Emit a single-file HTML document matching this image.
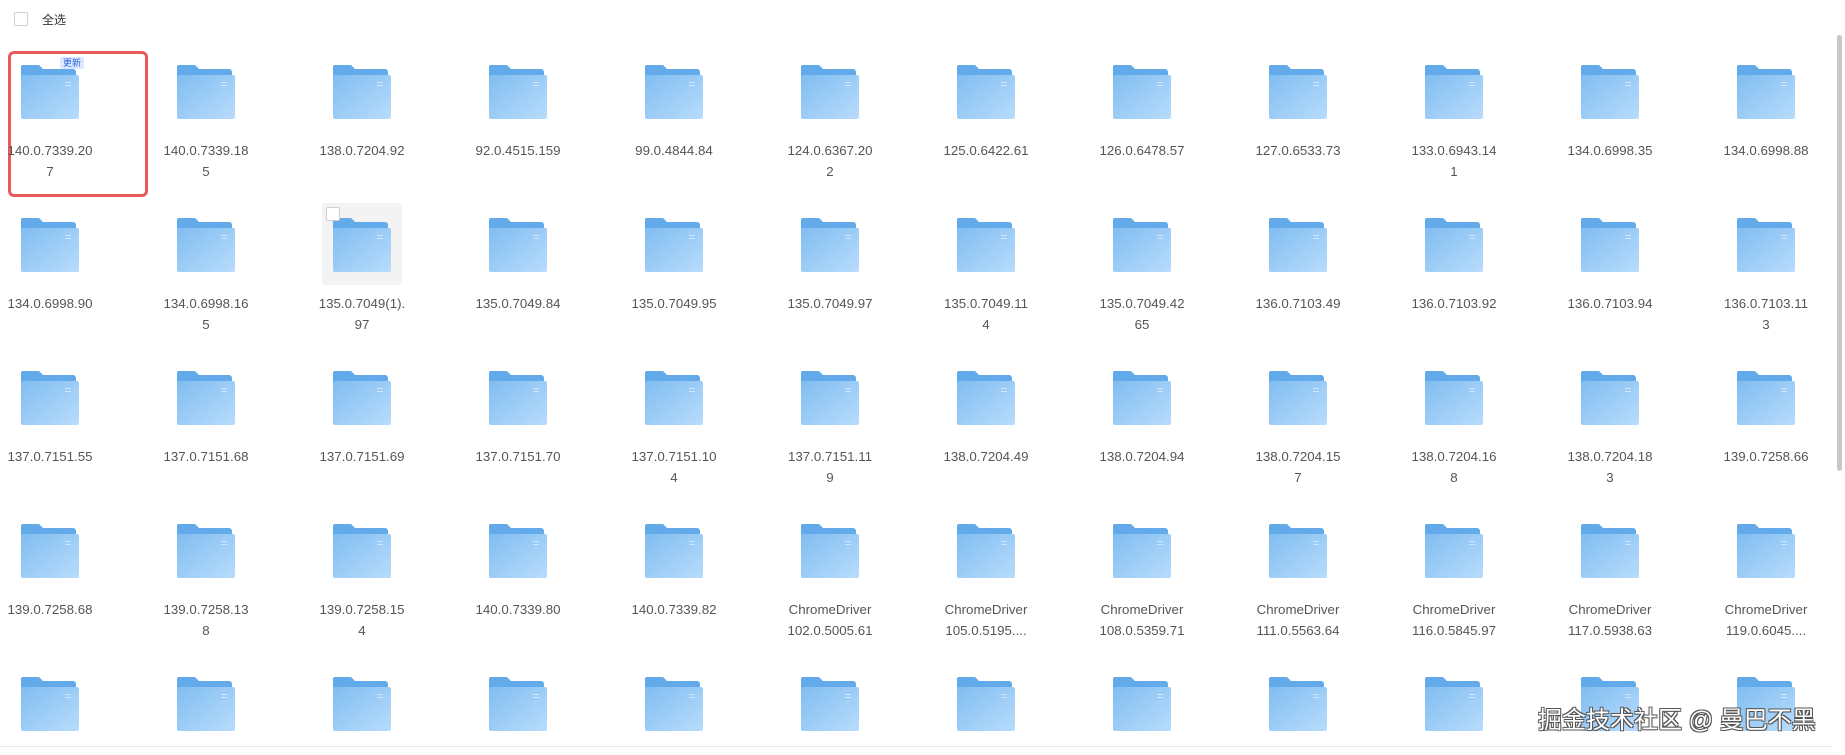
<!DOCTYPE html>
<html><head><meta charset="utf-8"><style>
body{margin:0;width:1845px;height:755px;overflow:hidden;background:#fff;font-family:"Liberation Sans","Noto Sans CJK SC",sans-serif;position:relative}
.cb{position:absolute;width:12px;height:12px;border:1px solid #d0d0d0;border-radius:2px;background:#fff;z-index:2}
.row{position:absolute;left:-28px;display:flex}
.it{width:156px;flex:none;text-align:center}
.it svg{display:block;margin:0 auto}
.t{width:89px;margin:20px auto 0;font-size:13.3px;line-height:21px;color:#555;overflow-wrap:anywhere}
</style></head><body>
<svg width="0" height="0" style="position:absolute"><defs>
<linearGradient id="fg" x1="0" y1="0" x2="1" y2="1"><stop offset="0" stop-color="#80bdf1"/><stop offset="1" stop-color="#b8dcfc"/></linearGradient>
<symbol id="f" viewBox="0 0 58 55"><path d="M2 0h16l4 4h30a3 3 0 0 1 3 3v44H0V2a2 2 0 0 1 2-2z" fill="#62aaea"/><path d="M1 10h55a2 2 0 0 1 2 2v40a2 2 0 0 1-2 2H2a2 2 0 0 1-2-2V11z" fill="url(#fg)"/><rect x="44" y="17" width="6" height="1" fill="#cfe6fb"/><rect x="44" y="20" width="6" height="1" fill="#cfe6fb"/></symbol>
</defs></svg>
<div class="cb" style="left:14px;top:12px"></div>
<div style="position:absolute;left:42px;top:11px;font-size:12px;color:#333">全选</div>
<div style="position:absolute;left:8px;top:51px;width:134px;height:140px;border:3px solid #e85a5a;border-radius:6px"></div>
<div style="position:absolute;left:322px;top:203px;width:80px;height:82px;background:#f3f3f3;border-radius:3px"></div>
<div class="cb" style="left:326px;top:207px"></div>
<div style="position:absolute;left:1837px;top:35px;width:5px;height:436px;background:#c8c8c8;border-radius:3px"></div>
<div style="position:absolute;left:0;top:746px;width:1832px;height:1px;background:#e8e8e8"></div>

<div class="row" style="top:65px">
<div class="it"><svg width="58" height="55"><use href="#f"/></svg><div class="t">140.0.7339.207</div></div>
<div class="it"><svg width="58" height="55"><use href="#f"/></svg><div class="t">140.0.7339.185</div></div>
<div class="it"><svg width="58" height="55"><use href="#f"/></svg><div class="t">138.0.7204.92</div></div>
<div class="it"><svg width="58" height="55"><use href="#f"/></svg><div class="t">92.0.4515.159</div></div>
<div class="it"><svg width="58" height="55"><use href="#f"/></svg><div class="t">99.0.4844.84</div></div>
<div class="it"><svg width="58" height="55"><use href="#f"/></svg><div class="t">124.0.6367.202</div></div>
<div class="it"><svg width="58" height="55"><use href="#f"/></svg><div class="t">125.0.6422.61</div></div>
<div class="it"><svg width="58" height="55"><use href="#f"/></svg><div class="t">126.0.6478.57</div></div>
<div class="it"><svg width="58" height="55"><use href="#f"/></svg><div class="t">127.0.6533.73</div></div>
<div class="it"><svg width="58" height="55"><use href="#f"/></svg><div class="t">133.0.6943.141</div></div>
<div class="it"><svg width="58" height="55"><use href="#f"/></svg><div class="t">134.0.6998.35</div></div>
<div class="it"><svg width="58" height="55"><use href="#f"/></svg><div class="t">134.0.6998.88</div></div>
</div>
<div class="row" style="top:218px">
<div class="it"><svg width="58" height="55"><use href="#f"/></svg><div class="t">134.0.6998.90</div></div>
<div class="it"><svg width="58" height="55"><use href="#f"/></svg><div class="t">134.0.6998.165</div></div>
<div class="it" style="position:relative;z-index:1"><svg width="58" height="55"><use href="#f"/></svg><div class="t">135.0.7049(1).97</div></div>
<div class="it"><svg width="58" height="55"><use href="#f"/></svg><div class="t">135.0.7049.84</div></div>
<div class="it"><svg width="58" height="55"><use href="#f"/></svg><div class="t">135.0.7049.95</div></div>
<div class="it"><svg width="58" height="55"><use href="#f"/></svg><div class="t">135.0.7049.97</div></div>
<div class="it"><svg width="58" height="55"><use href="#f"/></svg><div class="t">135.0.7049.114</div></div>
<div class="it"><svg width="58" height="55"><use href="#f"/></svg><div class="t">135.0.7049.4265</div></div>
<div class="it"><svg width="58" height="55"><use href="#f"/></svg><div class="t">136.0.7103.49</div></div>
<div class="it"><svg width="58" height="55"><use href="#f"/></svg><div class="t">136.0.7103.92</div></div>
<div class="it"><svg width="58" height="55"><use href="#f"/></svg><div class="t">136.0.7103.94</div></div>
<div class="it"><svg width="58" height="55"><use href="#f"/></svg><div class="t">136.0.7103.113</div></div>
</div>
<div class="row" style="top:371px">
<div class="it"><svg width="58" height="55"><use href="#f"/></svg><div class="t">137.0.7151.55</div></div>
<div class="it"><svg width="58" height="55"><use href="#f"/></svg><div class="t">137.0.7151.68</div></div>
<div class="it"><svg width="58" height="55"><use href="#f"/></svg><div class="t">137.0.7151.69</div></div>
<div class="it"><svg width="58" height="55"><use href="#f"/></svg><div class="t">137.0.7151.70</div></div>
<div class="it"><svg width="58" height="55"><use href="#f"/></svg><div class="t">137.0.7151.104</div></div>
<div class="it"><svg width="58" height="55"><use href="#f"/></svg><div class="t">137.0.7151.119</div></div>
<div class="it"><svg width="58" height="55"><use href="#f"/></svg><div class="t">138.0.7204.49</div></div>
<div class="it"><svg width="58" height="55"><use href="#f"/></svg><div class="t">138.0.7204.94</div></div>
<div class="it"><svg width="58" height="55"><use href="#f"/></svg><div class="t">138.0.7204.157</div></div>
<div class="it"><svg width="58" height="55"><use href="#f"/></svg><div class="t">138.0.7204.168</div></div>
<div class="it"><svg width="58" height="55"><use href="#f"/></svg><div class="t">138.0.7204.183</div></div>
<div class="it"><svg width="58" height="55"><use href="#f"/></svg><div class="t">139.0.7258.66</div></div>
</div>
<div class="row" style="top:524px">
<div class="it"><svg width="58" height="55"><use href="#f"/></svg><div class="t">139.0.7258.68</div></div>
<div class="it"><svg width="58" height="55"><use href="#f"/></svg><div class="t">139.0.7258.138</div></div>
<div class="it"><svg width="58" height="55"><use href="#f"/></svg><div class="t">139.0.7258.154</div></div>
<div class="it"><svg width="58" height="55"><use href="#f"/></svg><div class="t">140.0.7339.80</div></div>
<div class="it"><svg width="58" height="55"><use href="#f"/></svg><div class="t">140.0.7339.82</div></div>
<div class="it"><svg width="58" height="55"><use href="#f"/></svg><div class="t">ChromeDriver 102.0.5005.61</div></div>
<div class="it"><svg width="58" height="55"><use href="#f"/></svg><div class="t">ChromeDriver 105.0.5195....</div></div>
<div class="it"><svg width="58" height="55"><use href="#f"/></svg><div class="t">ChromeDriver 108.0.5359.71</div></div>
<div class="it"><svg width="58" height="55"><use href="#f"/></svg><div class="t">ChromeDriver 111.0.5563.64</div></div>
<div class="it"><svg width="58" height="55"><use href="#f"/></svg><div class="t">ChromeDriver 116.0.5845.97</div></div>
<div class="it"><svg width="58" height="55"><use href="#f"/></svg><div class="t">ChromeDriver 117.0.5938.63</div></div>
<div class="it"><svg width="58" height="55"><use href="#f"/></svg><div class="t">ChromeDriver 119.0.6045....</div></div>
</div>
<div class="row" style="top:677px">
<div class="it"><svg width="58" height="55"><use href="#f"/></svg></div>
<div class="it"><svg width="58" height="55"><use href="#f"/></svg></div>
<div class="it"><svg width="58" height="55"><use href="#f"/></svg></div>
<div class="it"><svg width="58" height="55"><use href="#f"/></svg></div>
<div class="it"><svg width="58" height="55"><use href="#f"/></svg></div>
<div class="it"><svg width="58" height="55"><use href="#f"/></svg></div>
<div class="it"><svg width="58" height="55"><use href="#f"/></svg></div>
<div class="it"><svg width="58" height="55"><use href="#f"/></svg></div>
<div class="it"><svg width="58" height="55"><use href="#f"/></svg></div>
<div class="it"><svg width="58" height="55"><use href="#f"/></svg></div>
<div class="it"><svg width="58" height="55"><use href="#f"/></svg></div>
<div class="it"><svg width="58" height="55"><use href="#f"/></svg></div>
</div>
<div style="position:absolute;left:60px;top:57px;padding:0 3px;background:#dbe8ff;color:#2a62e0;font-size:9px;line-height:12px;border-radius:2px;z-index:3">更新</div>
<div style="position:absolute;left:1538px;top:700px;font-size:24px;color:#fff;text-shadow:-1px -1px 0 #555,1px -1px 0 #555,-1px 1px 0 #555,1px 1px 0 #555;z-index:5">掘金技术社区 @ 曼巴不黑</div>
</body></html>
